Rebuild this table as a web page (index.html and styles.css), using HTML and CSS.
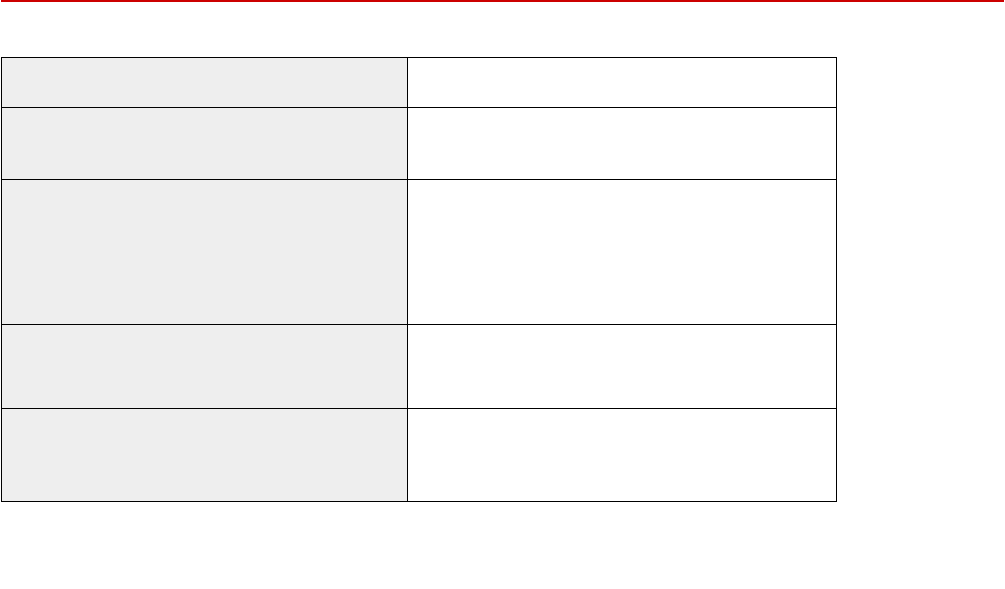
FILE: index.html
```html
<!DOCTYPE html>
<html lang="en">
<head>
<meta charset="utf-8">
<title>Table</title>
<link rel="stylesheet" href="styles.css">
</head>
<body>
<div class="topbar"></div>
<div class="spec">
  <div class="cell key r1"></div><div class="cell val r1"></div>
  <div class="cell key r2"></div><div class="cell val r2"></div>
  <div class="cell key r3"></div><div class="cell val r3"></div>
  <div class="cell key r4"></div><div class="cell val r4"></div>
  <div class="cell key r5"></div><div class="cell val r5"></div>
</div>
</body>
</html>
```
FILE: styles.css
```css
html, body {
  margin: 0;
  padding: 0;
  background: #ffffff;
  font-family: "Liberation Sans", Arial, sans-serif;
}
.topbar {
  height: 2px;
  margin: 0 1px;
  background: #cc0000;
}
.spec {
  margin: 55px 0 0 1px;
  width: 836px;
  box-sizing: border-box;
  display: grid;
  grid-template-columns: 406px 429px;
  grid-template-rows: 50px 72px 145px 84px 93px;
  border-top: 1px solid #000;
  border-left: 1px solid #000;
}
.cell {
  box-sizing: border-box;
  border-right: 1px solid #000;
  border-bottom: 1px solid #000;
}
.key {
  background: #eeeeee;
}
.val {
  background: #ffffff;
}
```
